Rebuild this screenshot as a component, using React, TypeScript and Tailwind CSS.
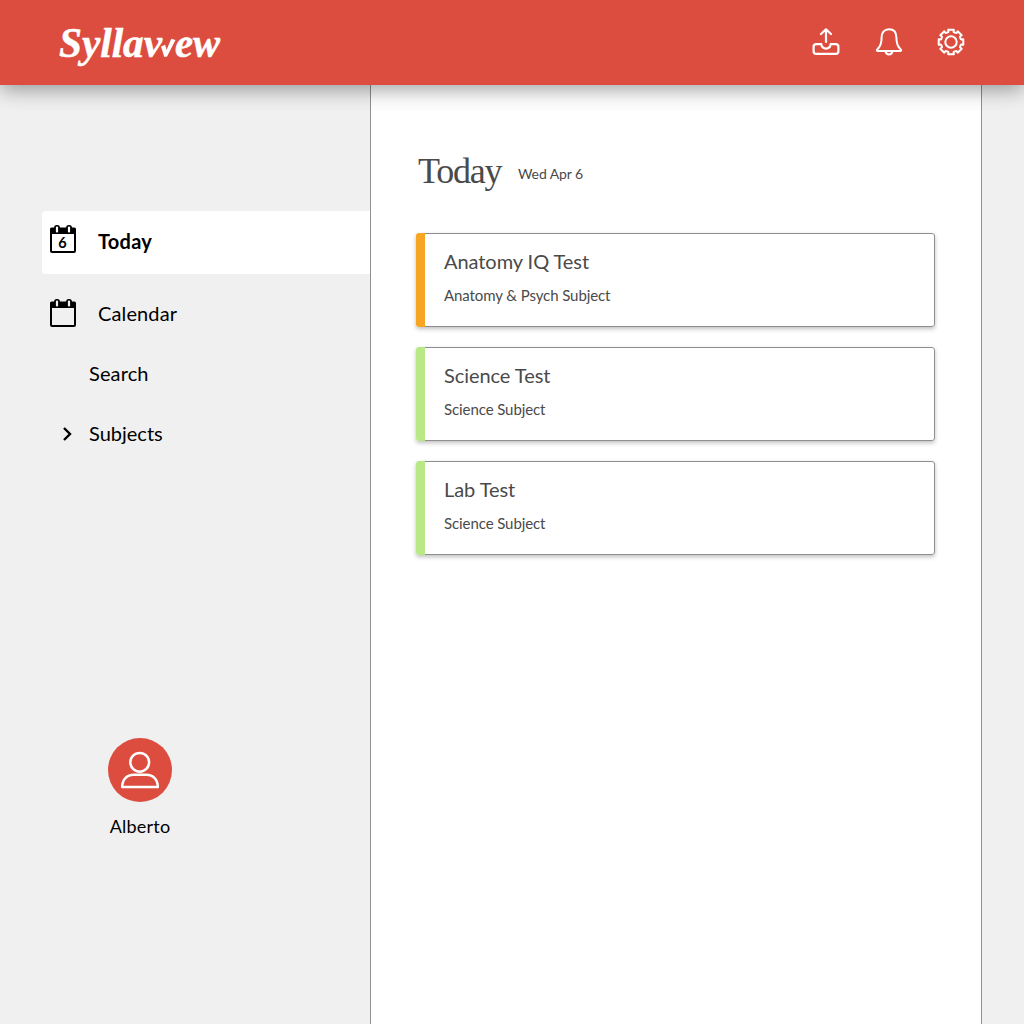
import React from 'react';

const GEAR = (() => {
  const pts: string[] = [];
  for (let i = 0; i < 8; i++) {
    const at = (r: number, deg: number) => {
      const a = ((i * 45 + deg - 90) * Math.PI) / 180;
      return `${(14 + r * Math.cos(a)).toFixed(2)} ${(14 + r * Math.sin(a)).toFixed(2)}`;
    };
    pts.push(`${i ? 'L' : 'M'}${at(10.4, -14.5)}L${at(12.6, -13)}L${at(12.6, 13)}L${at(10.4, 14.5)}Q${at(9.9, 22.5)} ${at(10.4, 30.5)}`);
  }
  return pts.join('') + 'Z';
})();

function Logo() {
  return (
    <svg width="164" height="48" viewBox="0 0 164 48" className="block overflow-visible" fill="#fff" stroke="#fff">
      <g fontFamily="'Liberation Serif', serif" fontWeight="700" fontStyle="italic" fontSize="42" strokeWidth="0.5">
        <text x="1" y="37.500" textLength="103" lengthAdjust="spacingAndGlyphs">Syllav</text>
        <text x="117" y="37.500" textLength="45" lengthAdjust="spacingAndGlyphs">ew</text>
      </g>
      <path stroke="none" d="M103 27.500l4.200-1.700 1.300 5.200 4.800-11.200 4.200 1.200-8.400 16.600-2.800.4z" />
    </svg>
  );
}

function UploadIcon() {
  return (
    <svg width="28" height="28" viewBox="0 0 28 28" fill="none" stroke="#fff" strokeWidth="2.200" strokeLinecap="round" strokeLinejoin="round">
      <path d="M14 14V1.500M9 6l5-4.700L19 6" />
      <path d="M9.300 16.200H4.200q-2.600 0-2.600 2.600v4.400q0 2.600 2.600 2.600h19.600q2.600 0 2.600-2.600v-4.400q0-2.600-2.600-2.600h-5.100q-.6 4.400-4.700 4.400t-4.700-4.400z" />
    </svg>
  );
}

function BellIcon() {
  return (
    <svg width="28" height="28" viewBox="0 0 28 28" fill="none" stroke="#fff" strokeWidth="2" strokeLinecap="round" strokeLinejoin="round">
      <path d="M14 1.200c-5 0-7.400 3.500-7.400 8.300 0 6.500-1.700 9.500-4 11.500-1.300 1.100-1 2 .1 2h22.600c1.100 0 1.400-.9.1-2-2.300-2-4-5-4-11.500 0-4.800-2.400-8.300-7.400-8.300z" />
      <path d="M10.500 23.300c.5 2.200 1.700 3.100 3.500 3.100s3-.9 3.500-3.100" />
    </svg>
  );
}

function GearIcon() {
  return (
    <svg width="28" height="28" viewBox="0 0 28 28" fill="none" stroke="#fff" strokeWidth="2" strokeLinejoin="round">
      <path d={GEAR} />
      <circle cx="14" cy="14" r="5.700" />
    </svg>
  );
}

function CalendarIcon({ day, page }: { day?: string; page: string }) {
  return (
    <svg width="26" height="28" viewBox="0 0 26 28" className="block">
      <path d="M1.500 2.500h23q1.500 0 1.500 1.500v22q0 2-2 2h-22q-2 0-2-2v-22q0-1.500 1.500-1.500z" />
      <path d="M2 9h22v17h-22z" fill={page} />
      <rect x="4.100" y="0" width="5.800" height="9" rx="2.600" />
      <rect x="16.100" y="0" width="5.800" height="9" rx="2.600" />
      <rect x="5.900" y="1.600" width="2.200" height="6" rx="1" fill={page} />
      <rect x="17.900" y="1.600" width="2.200" height="6" rx="1" fill={page} />
      {day && (
        <text x="12.500" y="23" textAnchor="middle" fontFamily="Lato, sans-serif" fontWeight="700" fontSize="14.500">{day}</text>
      )}
    </svg>
  );
}

function Avatar() {
  return (
    <div className="flex h-16 w-16 items-center justify-center rounded-full bg-[#dc4d3f]">
      <svg width="64" height="64" viewBox="0 0 64 64" fill="none" stroke="#fff" strokeWidth="2.500" strokeLinejoin="round">
        <circle cx="31.700" cy="24.300" r="9.400" />
        <path d="M14.200 48.900h35.600c0-7.400-4.600-12.100-11.600-12.100H25.800c-7 0-11.600 4.700-11.600 12.100z" />
      </svg>
    </div>
  );
}

const tasks = [
  { title: 'Anatomy IQ Test', subject: 'Anatomy & Psych Subject', color: 'bg-[#f6a623]' },
  { title: 'Science Test', subject: 'Science Subject', color: 'bg-[#b8e986]' },
  { title: 'Lab Test', subject: 'Science Subject', color: 'bg-[#b8e986]' },
];

export default function App() {
  return (
    <div className="flex h-[1024px] w-[1024px] flex-col overflow-hidden bg-[#f0f0f0] font-['Lato',sans-serif] text-black">
      <header className="relative z-10 flex h-[85px] shrink-0 items-center justify-between bg-[#dc4d3f] pr-[59px] pl-[58px] shadow-[0_4px_20px_rgba(0,0,0,0.4)]">
        <Logo />
        <div className="flex items-center gap-[34.5px] pb-[2px]">
          <UploadIcon />
          <BellIcon />
          <GearIcon />
        </div>
      </header>
      <div className="flex flex-1">
        <aside className="flex w-[370px] shrink-0 flex-col pl-[42px] text-xl">
          <nav className="mt-[126px] flex flex-col">
            <a className="flex h-[63px] items-center gap-[22px] rounded-l bg-white pl-2 font-bold">
              <div className="mb-[7px]"><CalendarIcon day="6" page="#fff" /></div>
              <span className="pb-[3px] tracking-[0.012em]">Today</span>
            </a>
            <a className="mt-[10px] flex h-[60px] items-center gap-[22px] pl-2">
              <div className="mb-[2px]"><CalendarIcon page="#f0f0f0" /></div>
              <span className="pb-[2px] tracking-[0.006em]">Calendar</span>
            </a>
            <a className="flex h-[60px] items-center pb-[2px] pl-[47px] tracking-[0.006em]">Search</a>
            <a className="flex h-[60px] items-center pl-[20px]">
              <svg width="12" height="14" viewBox="0 0 12 14" fill="none" stroke="#000" strokeWidth="2.400" className="mr-[15px]">
                <path d="M2 1l6 6-6 6" />
              </svg>
              <span className="pb-[2px]">Subjects</span>
            </a>
          </nav>
          <div className="mt-[274px] flex w-[196px] flex-col items-center gap-[10px] text-lg">
            <Avatar />
            <span className="tracking-[0.012em]">Alberto</span>
          </div>
        </aside>
        <main className="w-[612px] shrink-0 border-x border-[#8f8f8f] bg-white pr-[46px] pl-[45px] text-[#4a4a4a]">
          <div className="mt-[62px] flex h-[48px] items-start gap-[14px] pl-[2px]">
            <h1 className="w-[86px] font-['Liberation_Serif',serif] text-[36px] leading-[48px] tracking-[-0.035em]">Today</h1>
            <span className="mt-[17px] text-sm tracking-[-0.007em]">Wed Apr 6</span>
          </div>
          <div className="mt-[38px] flex flex-col gap-5">
            {tasks.map((t) => (
              <article key={t.title} className="flex h-[94px] overflow-hidden rounded-[3px] shadow-[0_2px_4px_rgba(0,0,0,0.25)]">
                <div className={`w-[9px] shrink-0 ${t.color}`} />
                <div className="flex-1 rounded-r-[3px] border border-l-0 border-[#8f8f8f] pt-[13px] pl-[19px]">
                  <h2 className="text-xl leading-7 tracking-[-0.003em]">{t.title}</h2>
                  <p className="mt-[8px] text-[15px] leading-6 tracking-[-0.006em]">{t.subject}</p>
                </div>
              </article>
            ))}
          </div>
        </main>
      </div>
    </div>
  );
}
